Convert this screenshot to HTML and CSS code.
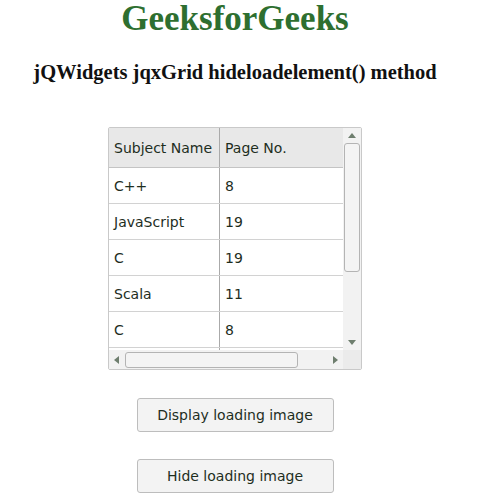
FILE: index.html
```html
<html lang="en">

<head>
    <meta charset="utf-8" />
    <title>jqxGrid hideloadelement</title>

    <link rel="stylesheet" href="styles.css">
</head>

<body>
<div class="page">
    <h1 class="titre">GeeksforGeeks</h1>
    <h3 class="sous-titre">jQWidgets jqxGrid hideloadelement() method</h3>

    <div class="grille">
        <div class="grille-corps">
            <div class="grille-vue">
                <div class="ligne entete">
                    <div class="cellule c1">Subject Name</div>
                    <div class="cellule c2">Page No.</div>
                </div>
                <div class="ligne">
                    <div class="cellule c1">C++</div>
                    <div class="cellule c2">8</div>
                </div>
                <div class="ligne">
                    <div class="cellule c1">JavaScript</div>
                    <div class="cellule c2">19</div>
                </div>
                <div class="ligne">
                    <div class="cellule c1">C</div>
                    <div class="cellule c2">19</div>
                </div>
                <div class="ligne">
                    <div class="cellule c1">Scala</div>
                    <div class="cellule c2">11</div>
                </div>
                <div class="ligne">
                    <div class="cellule c1">C</div>
                    <div class="cellule c2">8</div>
                </div>
                <!-- ligne suivante, coupee par la barre -->
                <div class="ligne">
                    <div class="cellule c1"></div>
                    <div class="cellule c2"></div>
                </div>
            </div>

            <!-- barre verticale -->
            <div class="vbarre">
                <span class="fleche haut"></span>
                <div class="vpouce"></div>
                <span class="fleche bas"></span>
            </div>
        </div>

        <!-- barre horizontale -->
        <div class="hbarre">
            <div class="hpiste">
                <span class="fleche gauche"></span>
                <div class="hpouce"></div>
                <span class="fleche droite"></span>
            </div>
            <div class="coin"></div>
        </div>
    </div>

    <button class="bouton premier">Display loading image</button>
    <button class="bouton">Hide loading image</button>
</div>
</body>
</html>
```

FILE: styles.css
```css
body {
    margin: 0;
    background: white;
}

div.page {
    width: 470px;
    display: flex;
    flex-direction: column;
    align-items: center;
}

h1.titre {
    margin: 0;
    font-family: 'Liberation Serif', 'Times New Roman', serif;
    font-size: 35px;
    line-height: 37px;
    color: #2e6f30;
}

h3.sous-titre {
    margin: 23px 0 0 0;
    font-family: 'Liberation Serif', 'Times New Roman', serif;
    font-size: 20.5px;
    line-height: 24px;
    color: #111;
}

div.grille {
    margin-top: 43px;
    width: 252px;
    border: 1px solid #c9c9c9;
    border-radius: 2px;
    font-family: 'DejaVu Sans', Verdana, sans-serif;
    font-size: 14px;
    color: #1e2e1e;
}

div.grille-corps {
    display: flex;
    height: 222px;
}

div.grille-vue {
    width: 234px;
    overflow: hidden;
}

div.ligne {
    display: flex;
    height: 35px;
    border-bottom: 1px solid #d2d2d2;
}

div.ligne.entete {
    height: 39px;
    background: #e8e8e8;
    border-bottom-color: #c4c4c4;
}

div.cellule {
    display: flex;
    align-items: center;
    padding-left: 5px;
    box-sizing: border-box;
}

div.cellule.c1 {
    width: 111px;
    border-right: 1px solid #aaaaaa;
}

div.cellule.c2 {
    flex: 1;
}

/* barres de defilement */
div.vbarre {
    width: 18px;
    background: #f2f2f2;
    display: flex;
    flex-direction: column;
    align-items: center;
}

div.vpouce {
    margin-top: 5px;
    width: 14px;
    height: 127px;
    border: 1px solid #b4b4b4;
    border-radius: 3px;
    background: #f4f4f4;
}

div.hbarre {
    display: flex;
    height: 19px;
}

div.hpiste {
    width: 234px;
    display: flex;
    align-items: center;
    background: #f2f2f2;
}

div.hpouce {
    margin-left: 6px;
    width: 171px;
    height: 14px;
    border: 1px solid #b4b4b4;
    border-radius: 3px;
    background: #f4f4f4;
}

div.coin {
    width: 18px;
    background: #ebebeb;
}

span.fleche {
    display: block;
    width: 0;
    height: 0;
    border: 4px solid transparent;
}

span.fleche.haut {
    margin-top: 5px;
    border-bottom: 5px solid #6e7e6e;
    border-top-width: 0;
}

span.fleche.bas {
    margin-top: auto;
    margin-bottom: 5px;
    border-top: 5px solid #6e7e6e;
    border-bottom-width: 0;
}

span.fleche.gauche {
    margin-left: 5px;
    border-right: 5px solid #6e7e6e;
    border-left-width: 0;
}

span.fleche.droite {
    margin-left: auto;
    margin-right: 5px;
    border-left: 5px solid #6e7e6e;
    border-right-width: 0;
}

button.bouton {
    width: 197px;
    height: 34px;
    margin-top: 27px;
    border: 1px solid #bdbdbd;
    border-radius: 3px;
    background: #f3f3f3;
    font-family: 'DejaVu Sans', Verdana, sans-serif;
    font-size: 14px;
    color: #1e2e1e;
    padding: 0;
}

button.bouton.premier {
    margin-top: 28px;
}
```
